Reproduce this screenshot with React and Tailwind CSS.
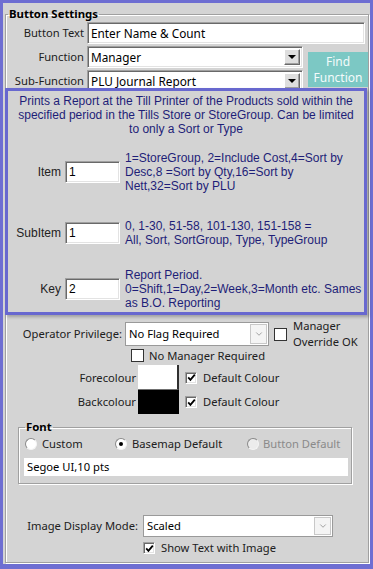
import React from 'react'
import { ChevronDown } from 'lucide-react'

// classic windows sunken edge
function Sunken({ className = '', children }) {
  return (
    <div className={`bg-white border border-t-[#a0a0a0] border-l-[#a0a0a0] border-r-white border-b-white shadow-[inset_1px_1px_0_#696969,inset_-1px_-1px_0_#e3e3e3] ${className}`}>
      {children}
    </div>
  )
}

function ClassicSelect({ value }) {
  return (
    <Sunken className="w-[216px] h-[22px] flex items-stretch pl-[3px] pr-[2px] py-[2px]">
      <span className="flex-1 flex items-center text-[11.8px] text-black">{value}</span>
      <span className="w-[16px] bg-[#dedede] border border-t-white border-l-white border-r-[#696969] border-b-[#696969] shadow-[inset_-1px_-1px_0_#a0a0a0] flex items-center justify-center">
        <span className="w-0 h-0 border-x-[4px] border-x-transparent border-t-[4px] border-t-black" />
      </span>
    </Sunken>
  )
}

function ModernSelect({ value, className = '' }) {
  return (
    <div className={`bg-white border border-[#9a9a9a] flex items-stretch ${className}`}>
      <span className="flex-1 pl-[3px] flex items-center text-black">{value}</span>
      <span className="w-[17px] my-[1px] mr-[1px] border border-[#c8c8c8] bg-[#f4f4f4] flex items-center justify-center">
        <ChevronDown size={10} strokeWidth={1.5} className="text-[#707070]" />
      </span>
    </div>
  )
}

function Tick() {
  return (
    <svg width="9" height="9" viewBox="0 0 9 9">
      <path d="M1.2 4.4 L3.4 6.8 L7.8 1.6" fill="none" stroke="black" strokeWidth="1.8" />
    </svg>
  )
}

function ClassicCheck({ checked }) {
  return (
    <Sunken className="w-[12px] h-[12px] shrink-0 flex items-center justify-center">
      {checked && <Tick />}
    </Sunken>
  )
}

function FlatCheck() {
  return <div className="w-[13px] h-[13px] shrink-0 bg-white border border-[#333]" />
}

function Radio({ selected, disabled }) {
  return (
    <div className={`w-[12px] h-[12px] shrink-0 rounded-full border border-t-[#8a8a8a] border-l-[#8a8a8a] border-r-[#f4f4f4] border-b-[#f4f4f4] flex items-center justify-center ${disabled ? 'bg-[#ececec]' : 'bg-white'}`}>
      {selected && <div className="w-[4px] h-[4px] rounded-full bg-black" />}
    </div>
  )
}

function ParamRow({ label, value, lines, className = '' }) {
  return (
    <div className={`flex items-center ${className}`}>
      <div className="w-[53px] text-right text-[12px] text-[#222]">{label}</div>
      <Sunken className="ml-[4px] w-[55px] h-[22px] pl-[3px] flex items-center text-[12px] text-black">{value}</Sunken>
      <div className="ml-[5px] whitespace-nowrap text-[12px] leading-[14px] text-[#1e1e78]">
        {lines.map((l, i) => (
          <div key={i}>{l}</div>
        ))}
      </div>
    </div>
  )
}

export default function App() {
  return (
    <div className="w-[373px] h-[569px] bg-[#6e6ed2] pt-[3px] pl-[3px] pr-[3px] pb-[5px] font-['Noto_Sans',sans-serif] text-[11.2px] leading-[16px] text-[#202020]">
      <div className="h-full bg-[#d4d4d4] pt-[3px] px-[2px]">
        <fieldset className="h-[557px] border border-[#a0a0a0] shadow-[1px_1px_0_#fff,inset_1px_1px_0_#fff]">
          <legend className="ml-[2px] px-[1px] font-bold text-[11.4px] leading-[16px] text-black">Button Settings</legend>

          {/* Button text */}
          <div className="flex items-center h-[22px]">
            <div className="w-[78px] text-right">Button Text</div>
            <Sunken className="ml-[3px] w-[278px] h-[22px] pl-[3px] flex items-center text-[11.8px] text-black">Enter Name &amp; Count</Sunken>
          </div>

          {/* Function / Sub-Function */}
          <div className="flex mt-[2px]">
            <div className="flex flex-col gap-[2px]">
              <div className="flex items-center">
                <div className="w-[78px] text-right">Function</div>
                <div className="ml-[3px]"><ClassicSelect value="Manager" /></div>
              </div>
              <div className="flex items-center">
                <div className="w-[78px] text-right whitespace-nowrap">Sub-Function</div>
                <div className="ml-[3px]"><ClassicSelect value="PLU Journal Report" /></div>
              </div>
            </div>
            <div className="ml-[5px] mt-[6px] w-[60px] h-[35px] bg-[#7cc8c4] text-[#f4fbfb] text-[12px] leading-[16px] flex flex-col items-center justify-center">
              <span>Find</span>
              <span>Function</span>
            </div>
          </div>

          {/* Description panel */}
          <div className="relative z-10 -mt-[4px] -ml-[1px] w-[362px] h-[227px] border-[3px] border-[#6868cf] bg-[#d3d3d3] shadow-[2px_2px_3px_rgba(0,0,0,0.25)] font-['Liberation_Sans',Arial,sans-serif]">
            <div className="mt-[3px] text-center whitespace-nowrap text-[12px] leading-[14px] text-[#1e1e78]">
              <div>Prints a Report at the Till Printer of the Products sold within the</div>
              <div>specified period in the Tills Store or StoreGroup. Can be limited</div>
              <div>to only a Sort or Type</div>
            </div>
            <ParamRow
              className="mt-[15px]"
              label="Item"
              value="1"
              lines={['1=StoreGroup, 2=Include Cost,4=Sort by', 'Desc,8 =Sort by Qty,16=Sort by', 'Nett,32=Sort by PLU']}
            />
            <ParamRow
              className="mt-[26px]"
              label="SubItem"
              value="1"
              lines={['0, 1-30, 51-58, 101-130, 151-158 =', 'All, Sort, SortGroup, Type, TypeGroup']}
            />
            <ParamRow
              className="mt-[21px]"
              label="Key"
              value="2"
              lines={['Report Period.', '0=Shift,1=Day,2=Week,3=Month etc. Sames', 'as B.O. Reporting']}
            />
          </div>

          {/* Operator privilege */}
          <div className="flex items-start h-[24px] mt-[7px]">
            <div className="w-[116px] h-[24px] flex items-center justify-end">Operator Privilege:</div>
            <ModernSelect value="No Flag Required" className="ml-[3px] w-[144px] h-[24px]" />
            <div className="ml-[5px] mt-[6px]"><FlatCheck /></div>
            <div className="ml-[6px] -mt-[4px] leading-[15.5px]">
              <div>Manager</div>
              <div>Override OK</div>
            </div>
          </div>

          <div className="flex items-center h-[13px] mt-[3px] ml-[125px]">
            <FlatCheck />
            <span className="ml-[5px] whitespace-nowrap">No Manager Required</span>
          </div>

          {/* Colours */}
          <div className="flex items-center mt-[3px]">
            <div className="w-[130px] text-right">Forecolour</div>
            <div className="ml-[2px] w-[41px] h-[25px] bg-white border-r-2 border-r-[#303030] border-b border-b-[#707070]" />
            <div className="ml-[6px]"><ClassicCheck checked /></div>
            <span className="ml-[6px]">Default Colour</span>
          </div>
          <div className="flex items-center">
            <div className="w-[130px] text-right">Backcolour</div>
            <div className="ml-[2px] w-[41px] h-[24px] bg-black" />
            <div className="ml-[6px]"><ClassicCheck checked /></div>
            <span className="ml-[6px]">Default Colour</span>
          </div>

          {/* Font */}
          <fieldset className="mt-[5px] ml-[12px] w-[334px] h-[65px] border border-[#a0a0a0] shadow-[1px_1px_0_#fff,inset_1px_1px_0_#fff]">
            <legend className="ml-[6px] px-[1px] font-bold text-[11.4px] leading-[16px] text-black">Font</legend>
            <div className="flex items-center h-[16px] mt-[1px] ml-[6px]">
              <div className="w-[90px] flex items-center">
                <Radio />
                <span className="ml-[5px]">Custom</span>
              </div>
              <div className="w-[132px] flex items-center">
                <Radio selected />
                <span className="ml-[5px]">Basemap Default</span>
              </div>
              <div className="flex items-center text-[#8a8a8a]">
                <Radio disabled />
                <span className="ml-[4px]">Button Default</span>
              </div>
            </div>
            <div className="mt-[6px] ml-[5px] w-[324px] h-[18px] bg-white pl-[3px] leading-[18px] text-black">Segoe UI,10 pts</div>
          </fieldset>

          {/* Image display mode */}
          <div className="flex items-center mt-[31px]">
            <div className="w-[132px] text-right whitespace-nowrap">Image Display Mode:</div>
            <ModernSelect value="Scaled" className="ml-[5px] w-[190px] h-[22px]" />
          </div>
          <div className="flex items-center h-[12px] mt-[5px] ml-[137px]">
            <ClassicCheck checked />
            <span className="ml-[6px] whitespace-nowrap">Show Text with Image</span>
          </div>
        </fieldset>
      </div>
    </div>
  )
}
